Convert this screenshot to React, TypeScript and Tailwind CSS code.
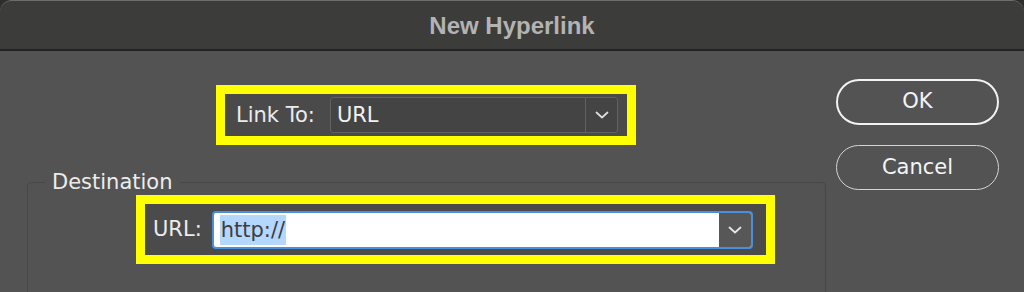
import React from 'react';

const font = { fontFamily: '"DejaVu Sans", "Liberation Sans", sans-serif' };

function Chevron({ className }: { className?: string }) {
  return (
    <svg width="14" height="8" viewBox="0 0 14 8" className={className}>
      <path d="M1.5 1.5 L7 6.5 L12.5 1.5" fill="none" stroke="currentColor" strokeWidth="1.8" strokeLinecap="round" strokeLinejoin="round" />
    </svg>
  );
}

export default function App() {
  return (
    <div className="w-[1024px] h-[292px] overflow-hidden bg-[#2e2e2e]" style={font}>
      <div className="h-full flex flex-col rounded-t-[12px] overflow-hidden bg-[#535353] border-t border-[#6e6e6e]">
        {/* title bar */}
        <div className="h-[50px] shrink-0 flex items-center justify-center bg-[#3c3c3b] border-b-2 border-[#232323]">
          <span className="text-[24px] font-bold text-[#b3b3b3] [font-family:'Liberation_Sans',sans-serif] pt-[2px]">
            New Hyperlink
          </span>
        </div>

        <div className="flex flex-1">
          {/* main column */}
          <div className="w-[826px] shrink-0 pl-[27px] flex flex-col">
            <div className="mt-[34px] flex justify-center pr-[1px]">
              <div className="w-[420px] h-[60px] border-[9px] border-[#ffff00] bg-[#4a4a4a] flex items-center pl-[11px] pr-[9px]">
                <span className="text-[21px] text-[#ececec] leading-none">Link To:</span>
                <div className="ml-[15px] flex-1 h-[36px] flex rounded-[3px] border border-[#616161] bg-[#444444]">
                  <div className="flex-1 flex items-center pl-[6px] text-[21px] text-[#f2f2f2] leading-none">URL</div>
                  <div className="w-[32px] flex items-center justify-center border-l border-[#616161] text-[#dcdcdc]">
                    <Chevron />
                  </div>
                </div>
              </div>
            </div>

            <fieldset className="mt-[25px] h-[150px] shrink-0 border border-[#474747] rounded-[4px]">
              <legend className="ml-[17px] px-[7px] text-[21px] leading-[24px] text-[#ececec]">Destination</legend>
              <div className="pl-[108px] pt-[1px]">
                <div className="w-[639px] h-[69px] border-[9px] border-[#ffff00] bg-[#4b4b4b] flex items-center pl-[8px] pr-[13px]">
                  <span className="text-[21px] text-[#ececec] leading-none">URL:</span>
                  <div className="ml-[10px] flex-1 h-[38px] flex rounded-[4px] border-2 border-[#4a8fdc] bg-white overflow-hidden">
                    <div className="flex-1 flex items-center pl-[6px]">
                      <span className="bg-[#b3d7ff] text-[#3d3d3d] text-[21px] leading-[30px] px-[1px]">http://</span>
                    </div>
                    <div className="w-[32px] flex items-center justify-center bg-[#575757] text-[#e6e6e6]">
                      <Chevron />
                    </div>
                  </div>
                </div>
              </div>
            </fieldset>
          </div>

          {/* buttons */}
          <div className="flex-1 flex flex-col pl-[10px] pt-[28px]">
            <button className="w-[163px] h-[46px] rounded-full border-2 border-[#f2f2f2] text-[21px] text-[#f4f4f4]">
              OK
            </button>
            <button className="mt-[20px] w-[163px] h-[45px] rounded-full border-[1.5px] border-[#d4d4d4] text-[21px] text-[#f4f4f4]">
              Cancel
            </button>
          </div>
        </div>
      </div>
    </div>
  );
}
